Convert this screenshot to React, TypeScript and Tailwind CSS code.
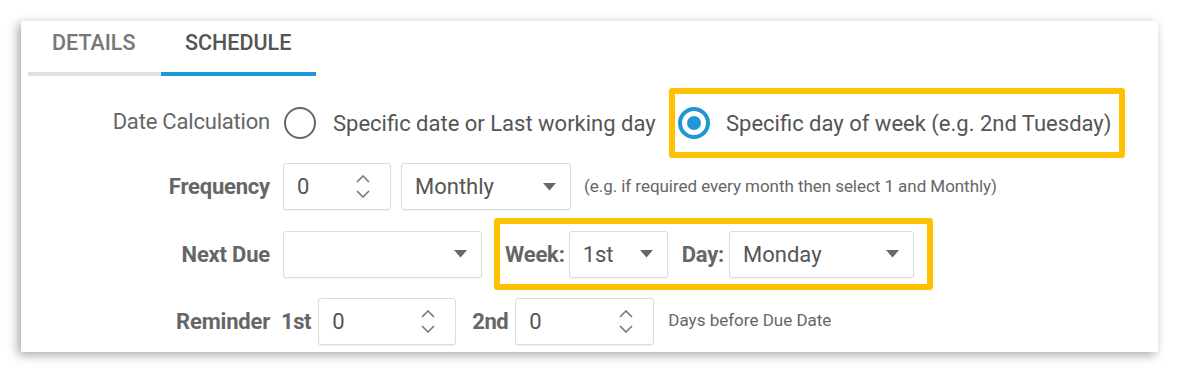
import React from 'react';

const font = { fontFamily: 'Roboto, "Liberation Sans", sans-serif' };

const Caret = () => (
  <svg width="13" height="8" viewBox="0 0 13 8" className="shrink-0">
    <path d="M0 0 L13 0 L6.5 7.5 Z" fill="#666" />
  </svg>
);

const Spinner = () => (
  <div className="flex flex-col items-center gap-[7px] shrink-0">
    <svg width="14" height="8" viewBox="0 0 14 8">
      <path d="M1 7 L7 1 L13 7" fill="none" stroke="#777" strokeWidth="1.6" />
    </svg>
    <svg width="14" height="8" viewBox="0 0 14 8">
      <path d="M1 1 L7 7 L13 1" fill="none" stroke="#777" strokeWidth="1.6" />
    </svg>
  </div>
);

const NumberBox = ({ w, value }: { w: string; value: string }) => (
  <div className={`${w} h-[47px] flex items-center justify-between pl-[13px] pr-[20px] border border-[#dcdcdc] rounded-[3px] shadow-[0_1px_1px_rgba(0,0,0,0.06)] bg-white`}>
    <span className="text-[22px] text-[#555]">{value}</span>
    <Spinner />
  </div>
);

const Select = ({ w, value }: { w: string; value: string }) => (
  <div className={`${w} h-[47px] flex items-center justify-between pl-[13px] pr-[14px] border border-[#dcdcdc] rounded-[3px] shadow-[0_1px_1px_rgba(0,0,0,0.06)] bg-white`}>
    <span className="text-[22px] text-[#555]">{value}</span>
    <Caret />
  </div>
);

const Label = ({ children, bold }: { children: React.ReactNode; bold?: boolean }) => (
  <div className={`w-[249px] shrink-0 text-right text-[22px] text-[#666] tracking-[-0.2px] ${bold ? 'font-bold' : ''}`}>
    {children}
  </div>
);

export default function App() {
  return (
    <div className="w-[1179px] h-[373px] bg-white pt-[21px] pl-[21px]" style={font}>
      <div className="w-[1137px] h-[331px] bg-white overflow-hidden shadow-[-3px_3px_10px_rgba(0,0,0,0.35)]">
        {/* tabs */}
        <div className="flex ml-[7px]">
          <div className="w-[133px] h-[55px] pl-[24px] pb-[7px] flex items-center border-b-4 border-[#e0e0e0] text-[21.5px] font-medium text-[#777]">
            DETAILS
          </div>
          <div className="w-[155px] h-[55px] pl-[24px] pb-[7px] flex items-center border-b-4 border-[#1e98d6] text-[21.5px] font-medium text-[#555]">
            SCHEDULE
          </div>
        </div>

        {/* Date Calculation */}
        <div className="flex items-center h-[70px] mt-[12px]">
          <div className="-mt-[3px]">
            <Label>Date Calculation</Label>
          </div>
          <div className="ml-[14px] w-[32px] h-[32px] rounded-full border-[2.5px] border-[#666] shrink-0" />
          <span className="ml-[17px] text-[22px] text-[#555] whitespace-nowrap">Specific date or Last working day</span>
          <div className="ml-auto mr-[33px] w-[456px] h-[70px] border-[6px] border-[#ffc000] rounded-[3px] flex items-center pl-[3px]">
            <div className="w-[32px] h-[32px] rounded-full border-[4px] border-[#1f97d4] flex items-center justify-center shrink-0">
              <div className="w-[14px] h-[14px] rounded-full bg-[#1f97d4]" />
            </div>
            <span className="ml-[16px] text-[22px] text-[#555] whitespace-nowrap">Specific day of week (e.g. 2nd Tuesday)</span>
          </div>
        </div>

        {/* Frequency */}
        <div className="flex items-center h-[47px] mt-[5px]">
          <Label bold>Frequency</Label>
          <div className="ml-[13px]">
            <NumberBox w="w-[108px]" value="0" />
          </div>
          <div className="ml-[10px]">
            <Select w="w-[170px]" value="Monthly" />
          </div>
          <span className="ml-[13px] text-[17px] text-[#666] tracking-[-0.05px] whitespace-nowrap">
            (e.g. if required every month then select 1 and Monthly)
          </span>
        </div>

        {/* Next Due */}
        <div className="flex items-center h-[72px] mt-[8px]">
          <Label bold>Next Due</Label>
          <div className="ml-[13px]">
            <Select w="w-[199px]" value="" />
          </div>
          <div className="ml-[12px] w-[439px] h-[72px] border-[6px] border-[#ffc000] rounded-[3px] flex items-center pl-[5px]">
            <span className="text-[22px] font-bold text-[#666] tracking-[-0.2px]">Week:</span>
            <div className="ml-[4px]">
              <Select w="w-[99px]" value="1st" />
            </div>
            <span className="ml-[14px] text-[22px] font-bold text-[#666] tracking-[-0.2px]">Day:</span>
            <div className="ml-[5px]">
              <Select w="w-[185px]" value="Monday" />
            </div>
          </div>
        </div>

        {/* Reminder */}
        <div className="flex items-center h-[48px] mt-[7px]">
          <Label bold>Reminder</Label>
          <span className="ml-[11px] text-[22px] font-bold text-[#666] tracking-[-0.4px]">1st</span>
          <div className="ml-[7px]">
            <NumberBox w="w-[138px]" value="0" />
          </div>
          <span className="ml-[16px] text-[22px] font-bold text-[#666] tracking-[-0.4px]">2nd</span>
          <div className="ml-[7px]">
            <NumberBox w="w-[139px]" value="0" />
          </div>
          <span className="ml-[14px] text-[17px] text-[#666] whitespace-nowrap">Days before Due Date</span>
        </div>
      </div>
    </div>
  );
}
